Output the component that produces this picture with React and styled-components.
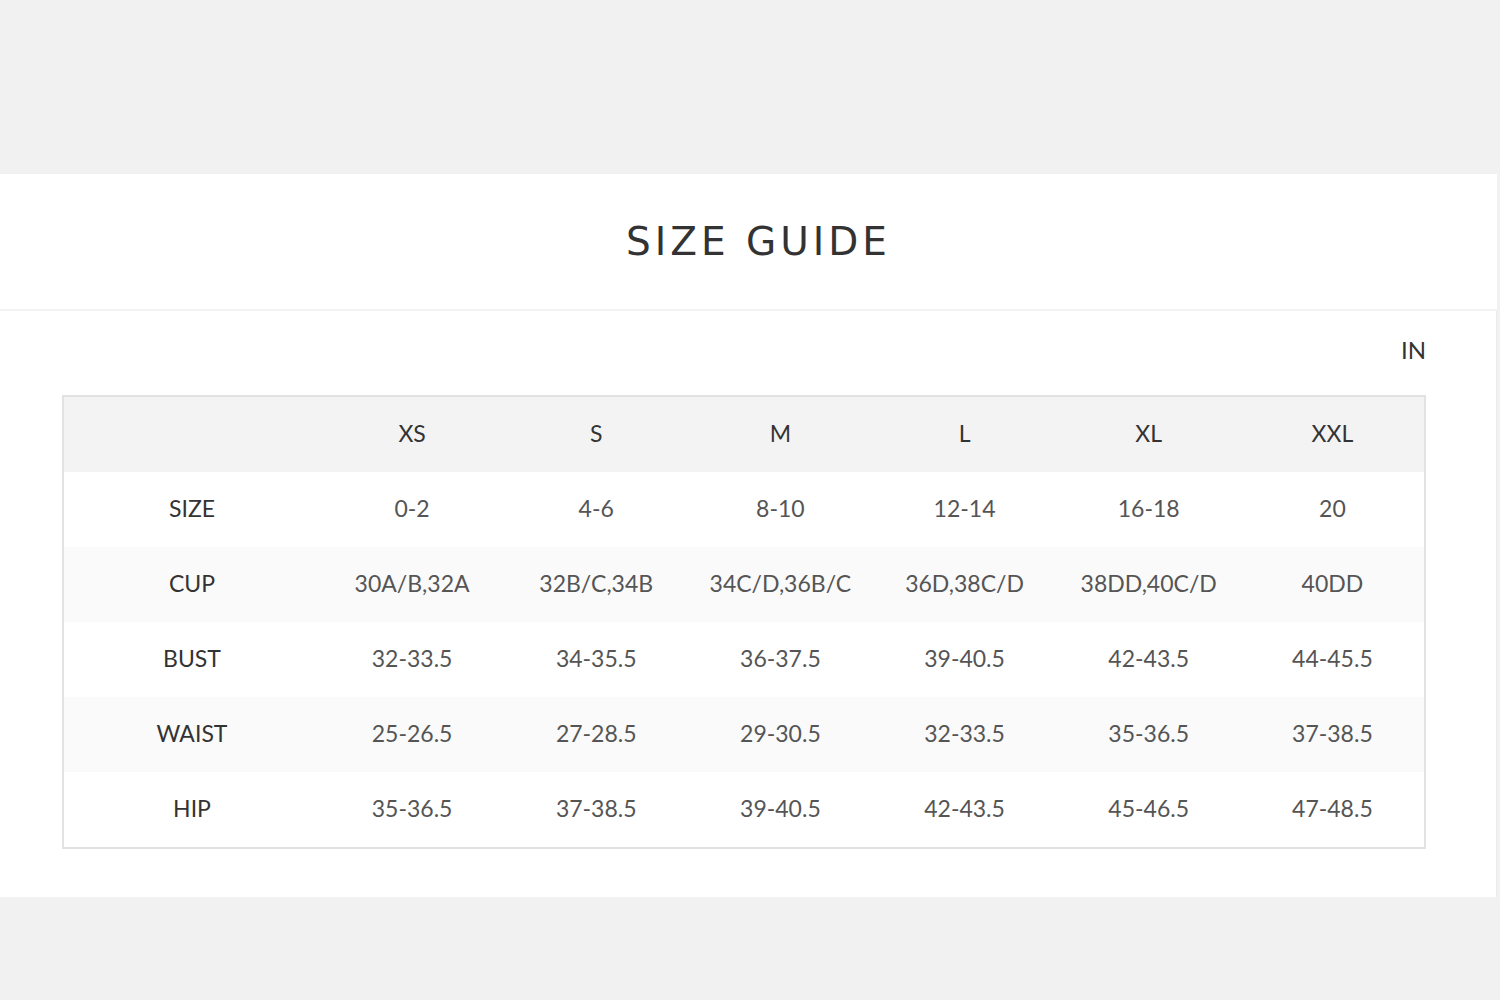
import React from 'react';
import styled, { createGlobalStyle } from 'styled-components';

const GlobalStyle = createGlobalStyle`
  body {
    margin: 0;
    background: #f1f1f1;
    font-family: 'Lato', 'Noto Sans', sans-serif;
  }
`;

const Page = styled.div`
  padding-top: 174px;
  height: 1000px;
  box-sizing: border-box;
`;

const Header = styled.div`
  width: 1497px;
  height: 135px;
  background: #fff;
  display: flex;
  align-items: center;
  justify-content: center;
  border-bottom: 2px solid #f3f3f3;
`;

const Title = styled.h1`
  margin: 0;
  padding-left: 20px;
  font-family: 'DejaVu Sans', sans-serif;
  font-weight: normal;
  font-size: 39px;
  letter-spacing: 4px;
  color: #333;
`;

const Body = styled.div`
  width: 1497px;
  box-sizing: border-box;
  background: #fff;
  padding: 24px 70px 48px 62px;
  border-right: 1px solid #eaeaea;
`;

const Unit = styled.div`
  text-align: right;
  font-size: 24px;
  color: #333;
  height: 60px;
  box-sizing: border-box;
`;

const Table = styled.table`
  width: 100%;
  table-layout: fixed;
  border-collapse: collapse;
  border: 2px solid #e2e2e2;
  text-align: center;
  font-size: 23px;
  color: #555;
  th,
  td {
    height: 71px;
    padding: 0 0 4px;
    font-weight: normal;
  }
  th {
    color: #333;
  }
  th:first-child {
    width: 256px;
  }
  thead tr {
    background: #f3f3f3;
  }
  tbody tr:nth-child(even) {
    background: #fafafa;
  }
  tbody td:first-child {
    color: #333;
  }
`;

const sizes = ['XS', 'S', 'M', 'L', 'XL', 'XXL'];

const rows = [
  { label: 'SIZE', values: ['0-2', '4-6', '8-10', '12-14', '16-18', '20'] },
  { label: 'CUP', values: ['30A/B,32A', '32B/C,34B', '34C/D,36B/C', '36D,38C/D', '38DD,40C/D', '40DD'] },
  { label: 'BUST', values: ['32-33.5', '34-35.5', '36-37.5', '39-40.5', '42-43.5', '44-45.5'] },
  { label: 'WAIST', values: ['25-26.5', '27-28.5', '29-30.5', '32-33.5', '35-36.5', '37-38.5'] },
  { label: 'HIP', values: ['35-36.5', '37-38.5', '39-40.5', '42-43.5', '45-46.5', '47-48.5'] },
];

export default function App() {
  return (
    <>
      <GlobalStyle />
      <Page>
        <Header>
          <Title>SIZE GUIDE</Title>
        </Header>
        <Body>
          <Unit>IN</Unit>
          <Table>
            <thead>
              <tr>
                <th></th>
                {sizes.map((s) => (
                  <th key={s}>{s}</th>
                ))}
              </tr>
            </thead>
            <tbody>
              {rows.map((row) => (
                <tr key={row.label}>
                  <td>{row.label}</td>
                  {row.values.map((v, i) => (
                    <td key={i}>{v}</td>
                  ))}
                </tr>
              ))}
            </tbody>
          </Table>
        </Body>
      </Page>
    </>
  );
}
